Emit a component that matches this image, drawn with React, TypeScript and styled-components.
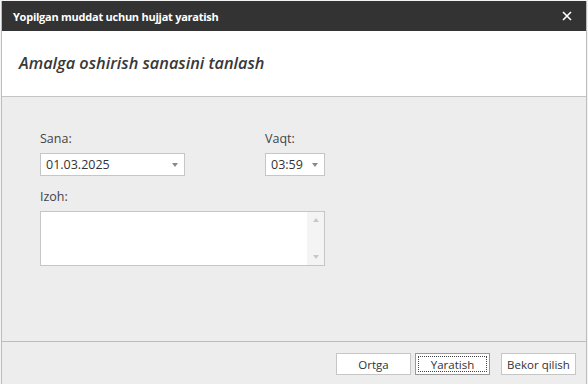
import React from "react";
import styled, { createGlobalStyle } from "styled-components";

const GlobalStyle = createGlobalStyle`
  html, body {
    margin: 0;
    padding: 0;
    background: #f3f3f3;
    font-family: "Segoe UI", "Open Sans", "Noto Sans", sans-serif;
    overflow: hidden;
  }
`;

const Page = styled.div`
  width: 588px;
  height: 384px;
  padding-top: 1px;
  box-sizing: border-box;
  display: flex;
`;

const Dialog = styled.div`
  margin-left: 1px;
  width: 586px;
  height: 383px;
  box-sizing: border-box;
  border-left: 1px solid #bdbdbd;
  border-right: 1px solid #bdbdbd;
  display: flex;
  flex-direction: column;
  background: #ededed;
`;

const TitleBar = styled.div`
  height: 30px;
  flex: none;
  background: #333333;
  color: #ffffff;
  display: flex;
  align-items: center;
  justify-content: space-between;
  padding: 0 14px 0 11px;
  font-size: 11px;
  letter-spacing: -0.25px;
  font-weight: 700;
`;

const CloseButton = styled.span`
  display: flex;
  width: 10px;
  height: 10px;
`;

const Header = styled.div`
  height: 66px;
  flex: none;
  background: #ffffff;
  border-bottom: 1px solid #c4c4c4;
  box-sizing: border-box;
  display: flex;
  align-items: center;
  padding-left: 17px;
  padding-bottom: 2px;
`;

const Heading = styled.h1`
  margin: 0;
  font-size: 16.3px;
  font-style: italic;
  font-weight: 600;
  color: #383838;
`;

const Body = styled.div`
  flex: 1;
  padding: 33px 0 0 38px;
  display: flex;
  flex-direction: column;
`;

const Row = styled.div`
  display: flex;
  gap: 80px;
`;

const Field = styled.div<{ $top?: number }>`
  display: flex;
  flex-direction: column;
  margin-top: ${(p) => p.$top ?? 0}px;
`;

const Label = styled.label`
  font-size: 12.5px;
  line-height: 17px;
  color: #444444;
  margin-bottom: 6px;
`;

const Select = styled.div<{ $width: number }>`
  width: ${(p) => p.$width}px;
  height: 23px;
  box-sizing: border-box;
  background: #ffffff;
  border: 1px solid #c6c6c6;
  display: flex;
  align-items: center;
  justify-content: space-between;
  padding: 0 6px 0 5px;
  font-size: 12.5px;
  color: #333333;
`;

const Caret = styled.span`
  width: 0;
  height: 0;
  border-left: 3.5px solid transparent;
  border-right: 3.5px solid transparent;
  border-top: 4px solid #8a8a8a;
`;

const TextArea = styled.div`
  width: 285px;
  height: 55px;
  box-sizing: border-box;
  background: #ffffff;
  border: 1px solid #c6c6c6;
  display: flex;
  justify-content: flex-end;
`;

const ScrollBar = styled.div`
  width: 17px;
  background: #f4f4f4;
  display: flex;
  flex-direction: column;
  justify-content: space-between;
  align-items: center;
  padding: 6px 0;
`;

const Arrow = styled.span<{ $up?: boolean }>`
  width: 0;
  height: 0;
  border-left: 3.5px solid transparent;
  border-right: 3.5px solid transparent;
  ${(p) =>
    p.$up ? "border-bottom: 4px solid #c8c8c8;" : "border-top: 4px solid #c8c8c8;"}
`;

const Footer = styled.div`
  height: 43px;
  flex: none;
  border-top: 1px solid #bcbcbc;
  box-sizing: border-box;
  display: flex;
  justify-content: flex-end;
  padding: 11px 10px 0 0;
`;

const Button = styled.button<{ $focused?: boolean; $gap?: number }>`
  width: 75px;
  height: 22px;
  margin-left: ${(p) => p.$gap ?? 0}px;
  background: #ffffff;
  border: 1px solid ${(p) => (p.$focused ? "#9a9a9a" : "#c6c6c6")};
  font-family: inherit;
  font-size: 11.5px;
  color: #333333;
  padding: 0;
  position: relative;
  ${(p) =>
    p.$focused &&
    `&::after {
      content: "";
      position: absolute;
      inset: 2px;
      border: 1px dotted #444;
    }`}
`;

export default function App() {
  return (
    <>
      <GlobalStyle />
      <Page>
        <Dialog>
          <TitleBar>
            <span>Yopilgan muddat uchun hujjat yaratish</span>
            <CloseButton>
              <svg width="10" height="10" viewBox="0 0 10 10">
                <path d="M1 1L9 9M9 1L1 9" stroke="#ffffff" strokeWidth="1.6" />
              </svg>
            </CloseButton>
          </TitleBar>
          <Header>
            <Heading>Amalga oshirish sanasini tanlash</Heading>
          </Header>
          <Body>
            <Row>
              <Field>
                <Label>Sana:</Label>
                <Select $width={145}>
                  <span>01.03.2025</span>
                  <Caret />
                </Select>
              </Field>
              <Field>
                <Label>Vaqt:</Label>
                <Select $width={60}>
                  <span>03:59</span>
                  <Caret />
                </Select>
              </Field>
            </Row>
            <Field $top={12}>
              <Label>Izoh:</Label>
              <TextArea>
                <ScrollBar>
                  <Arrow $up />
                  <Arrow />
                </ScrollBar>
              </TextArea>
            </Field>
          </Body>
          <Footer>
            <Button>Ortga</Button>
            <Button $focused $gap={4}>
              Yaratish
            </Button>
            <Button $gap={11}>Bekor qilish</Button>
          </Footer>
        </Dialog>
      </Page>
    </>
  );
}
